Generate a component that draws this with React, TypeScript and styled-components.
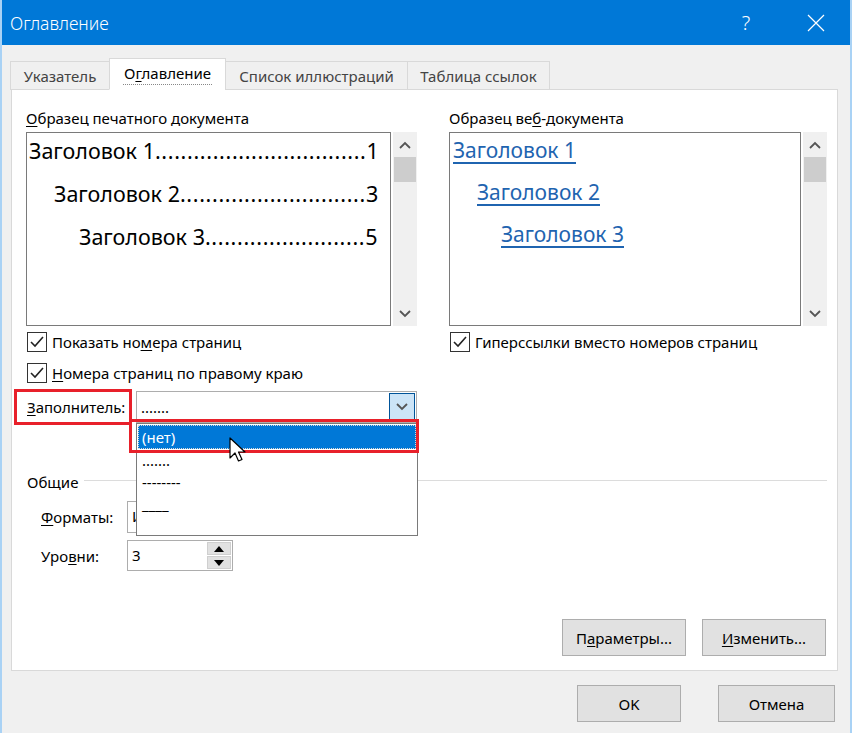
import styled, { createGlobalStyle } from 'styled-components';

const GlobalStyle = createGlobalStyle`
  html, body {
    margin: 0;
    padding: 0;
    background: #f0f0f0;
  }
  body {
    font-family: 'Noto Sans', 'Open Sans', sans-serif;
    font-size: 15px;
    color: #000;
  }
  * { box-sizing: border-box; }
`;

const Window = styled.div`
  width: 852px;
  height: 733px;
  display: flex;
  flex-direction: column;
  background: #f0f0f0;
  border-left: 2px solid #a9d2f5;
  border-right: 2px solid #a9d2f5;
  overflow: hidden;
`;

const TitleBar = styled.div`
  height: 45px;
  margin: 0 -2px;
  padding: 0 13px 0 10px;
  display: flex;
  align-items: center;
  background: #0078d7;
  color: #fff;
`;

const Title = styled.div`
  flex: 1;
  font-size: 17.5px;
  font-weight: 300;
`;

const TitleButton = styled.div<{ $gap?: number }>`
  width: 46px;
  height: 45px;
  display: flex;
  align-items: center;
  justify-content: center;
  font-size: 20px;
  font-weight: 300;
  margin-left: ${(p) => p.$gap ?? 0}px;
`;

const Body = styled.div`
  flex: 1;
  display: flex;
  flex-direction: column;
  padding: 12px 12px 0 9px;
`;

const Tabs = styled.div`
  display: flex;
  align-items: flex-end;
  height: 32px;
  position: relative;
  z-index: 1;
`;

const Tab = styled.div<{ $active?: boolean; $w: number }>`
  width: ${(p) => p.$w}px;
  height: ${(p) => (p.$active ? 32 : 29)}px;
  display: flex;
  align-items: center;
  justify-content: center;
  font-size: 15px;
  color: ${(p) => (p.$active ? '#000' : '#444')};
  background: ${(p) => (p.$active ? '#fff' : '#f0f0f0')};
  border: 1px solid #d9d9d9;
  border-bottom: ${(p) => (p.$active ? '1px solid #fff' : '1px solid #d9d9d9')};
  margin-left: -1px;
  margin-bottom: -1px;
`;

const TabLabel = styled.span`
  border-bottom: 1px dotted #888;
  padding: 0 1px 1px;
`;

const Panel = styled.div`
  height: 582px;
  background: #fff;
  border: 1px solid #d9d9d9;
  display: flex;
  flex-direction: column;
  padding: 18px 11px 14px 14px;
`;

const Columns = styled.div`
  display: flex;
  gap: 32px;
`;

const Column = styled.div<{ $w: number }>`
  width: ${(p) => p.$w}px;
  flex-shrink: 0;
  min-width: 0;
  display: flex;
  flex-direction: column;
`;

const Caption = styled.div`
  height: 21px;
  line-height: 21px;
  font-size: 15px;
  margin-bottom: 3px;
  white-space: nowrap;
`;

const PreviewFrame = styled.div`
  height: 194px;
  display: flex;
`;

const PreviewBox = styled.div`
  flex: 1;
  min-width: 0;
  border: 1px solid #7a7a7a;
  background: #fff;
  padding: 0 13px 0 2px;
  display: flex;
  flex-direction: column;
  overflow: hidden;
`;

const Scrollbar = styled.div`
  width: 24px;
  flex-shrink: 0;
  margin-left: 2px;
  background: #f0f0f0;
  display: flex;
  flex-direction: column;
  align-items: center;
`;

const ScrollArrow = styled.div`
  height: 25px;
  width: 100%;
  display: flex;
  align-items: center;
  justify-content: center;
`;

const ScrollThumb = styled.div`
  width: 22px;
  height: 25px;
  background: #cdcdcd;
`;

const ScrollTrack = styled.div`
  flex: 1;
`;

const TocLine = styled.div<{ $indent: number }>`
  display: flex;
  align-items: baseline;
  height: 43px;
  line-height: 36px;
  padding-left: ${(p) => p.$indent}px;
  font-size: 21.5px;
  white-space: nowrap;
`;

const Leader = styled.span`
  letter-spacing: 0.65px;
`;

const PageNum = styled.span`
  margin-left: auto;
`;

const WebLine = styled.div<{ $indent: number }>`
  height: 42px;
  line-height: 34px;
  padding-left: ${(p) => p.$indent}px;
  font-size: 21px;
  white-space: nowrap;
`;

const WebLink = styled.span`
  color: #1f64b0;
  text-decoration: underline;
  text-decoration-thickness: 2px;
  text-underline-offset: 4px;
`;

const CheckRow = styled.div`
  display: flex;
  align-items: center;
  height: 31px;
  gap: 5px;
  padding-left: 1px;
  white-space: nowrap;
`;

const Box = styled.div`
  width: 20px;
  height: 20px;
  border: 1px solid #333;
  background: #fff;
  display: flex;
  align-items: center;
  justify-content: center;
`;

const U = styled.span`
  text-decoration: underline;
  text-underline-offset: 2px;
`;

const FillerRow = styled.div`
  position: relative;
  display: flex;
  align-items: center;
  height: 36px;
  margin-top: 1px;
  padding-left: 1px;
`;

const FillerLabel = styled.div`
  width: 109px;
`;

const HighlightBox = styled.div<{ $l: number; $t: number; $w: number; $h: number }>`
  position: absolute;
  left: ${(p) => p.$l}px;
  top: ${(p) => p.$t}px;
  width: ${(p) => p.$w}px;
  height: ${(p) => p.$h}px;
  border: 3px solid #e8202a;
  pointer-events: none;
  z-index: 5;
`;

const Combo = styled.div<{ $w: number }>`
  position: relative;
  width: ${(p) => p.$w}px;
  height: 32px;
  border: 1px solid #adadad;
  background: #fff;
  display: flex;
  align-items: center;
  padding-left: 4px;
`;

const ComboText = styled.span`
  flex: 1;
  font-size: 15px;
  line-height: 1;
`;

const DropButton = styled.div`
  width: 26px;
  height: 28px;
  margin-right: 1px;
  background: #cce4f7;
  border: 1px solid #005499;
  display: flex;
  align-items: center;
  justify-content: center;
`;

const DropList = styled.div`
  position: absolute;
  left: -1px;
  top: 31px;
  width: 282px;
  height: 113px;
  background: #fff;
  border: 1px solid #7a7a7a;
  padding: 1px;
  z-index: 4;
`;

const DropItem = styled.div<{ $selected?: boolean }>`
  height: ${(p) => (p.$selected ? 24 : 22)}px;
  display: flex;
  align-items: center;
  padding-left: 4px;
  color: ${(p) => (p.$selected ? '#fff' : '#000')};
  background: ${(p) => (p.$selected ? '#0078d7' : '#fff')};
  outline: ${(p) => (p.$selected ? '1px dotted #d8d8d8' : 'none')};
  outline-offset: -1px;
  font-size: 15px;
`;

const Cursor = styled.svg`
  position: absolute;
  left: 92px;
  top: 45px;
  z-index: 6;
`;

const Group = styled.div`
  margin-top: 46px;
  display: flex;
  flex-direction: column;
`;

const GroupHeader = styled.div`
  display: flex;
  align-items: center;
  gap: 6px;
  height: 22px;
  padding-left: 1px;
`;

const GroupLine = styled.div`
  flex: 1;
  height: 1px;
  background: #dcdcdc;
  margin-right: -1px;
  margin-top: -3px;
`;

const FormRow = styled.div`
  display: flex;
  align-items: center;
  height: 39px;
  padding-left: 15px;
`;

const FormLabel = styled.div`
  width: 86px;
`;

const SpinBox = styled.div`
  width: 106px;
  height: 31px;
  border: 1px solid #adadad;
  background: #fff;
  display: flex;
  align-items: center;
  padding-left: 4px;
`;

const SpinButtons = styled.div`
  width: 24px;
  display: flex;
  flex-direction: column;
  gap: 1px;
  margin-right: 1px;
`;

const SpinButton = styled.div`
  height: 13px;
  background: #e1e1e1;
  border: 1px solid #cfcfcf;
  display: flex;
  align-items: center;
  justify-content: center;
`;

const PanelButtons = styled.div`
  margin-top: auto;
  display: flex;
  justify-content: flex-end;
  gap: 16px;
`;

const Button = styled.div<{ $w: number }>`
  width: ${(p) => p.$w}px;
  height: 37px;
  background: #e1e1e1;
  border: 1px solid #adadad;
  display: flex;
  align-items: center;
  justify-content: center;
  font-size: 15px;
`;

const Footer = styled.div`
  display: flex;
  justify-content: flex-end;
  gap: 37px;
  padding: 14px 3px 0 0;
`;

const Chevron = ({ up }: { up?: boolean }) => (
  <svg width="12" height="8" viewBox="0 0 12 8">
    <path
      d={up ? 'M1 7 L6 2 L11 7' : 'M1 1 L6 6 L11 1'}
      fill="none"
      stroke="#555"
      strokeWidth="1.8"
    />
  </svg>
);

const Check = () => (
  <svg width="16" height="14" viewBox="0 0 16 14">
    <path d="M2 7 L6 11 L14 2" fill="none" stroke="#222" strokeWidth="1.6" />
  </svg>
);

const Tri = ({ up }: { up?: boolean }) => (
  <svg width="10" height="6" viewBox="0 0 10 6">
    <path d={up ? 'M0 6 L5 0 L10 6 Z' : 'M0 0 L5 6 L10 0 Z'} fill="#000" />
  </svg>
);

function PreviewScroll() {
  return (
    <Scrollbar>
      <ScrollArrow>
        <Chevron up />
      </ScrollArrow>
      <ScrollThumb />
      <ScrollTrack />
      <ScrollArrow>
        <Chevron />
      </ScrollArrow>
    </Scrollbar>
  );
}

const tocLines = [
  { name: 'Заголовок 1', page: '1', indent: 0, dots: 33 },
  { name: 'Заголовок 2', page: '3', indent: 25, dots: 29 },
  { name: 'Заголовок 3', page: '5', indent: 50, dots: 25 },
];

const webLines = [
  { name: 'Заголовок 1', indent: 1 },
  { name: 'Заголовок 2', indent: 25 },
  { name: 'Заголовок 3', indent: 49 },
];

export default function App() {
  return (
    <>
      <GlobalStyle />
      <Window>
        <TitleBar>
          <Title>Оглавление</Title>
          <TitleButton>?</TitleButton>
          <TitleButton $gap={24}>
            <svg width="18" height="18" viewBox="0 0 18 18">
              <path d="M1 1 L17 17 M17 1 L1 17" stroke="#fff" strokeWidth="1.2" />
            </svg>
          </TitleButton>
        </TitleBar>
        <Body>
          <Tabs>
            <Tab $w={100}>Указатель</Tab>
            <Tab $w={117} $active>
              <TabLabel>
                О<U>г</U>лавление
              </TabLabel>
            </Tab>
            <Tab $w={183}>Список иллюстраций</Tab>
            <Tab $w={143}>Таблица ссылок</Tab>
          </Tabs>
          <Panel>
            <Columns>
              <Column $w={391}>
                <Caption>
                  <U>О</U>бразец печатного документа
                </Caption>
                <PreviewFrame>
                  <PreviewBox>
                    {tocLines.map((l) => (
                      <TocLine key={l.name} $indent={l.indent}>
                        <span>{l.name}</span>
                        <Leader>{'.'.repeat(l.dots)}</Leader>
                        <PageNum>{l.page}</PageNum>
                      </TocLine>
                    ))}
                  </PreviewBox>
                  <PreviewScroll />
                </PreviewFrame>
                <CheckRow>
                  <Box>
                    <Check />
                  </Box>
                  <span>
                    Показать но<U>м</U>ера страниц
                  </span>
                </CheckRow>
                <CheckRow>
                  <Box>
                    <Check />
                  </Box>
                  <span>
                    <U>Н</U>омера страниц по правому краю
                  </span>
                </CheckRow>
                <FillerRow>
                  <HighlightBox $l={-12} $t={0} $w={118} $h={36} />
                  <FillerLabel>
                    <U>З</U>аполнитель:
                  </FillerLabel>
                  <Combo $w={281}>
                    <ComboText>.......</ComboText>
                    <DropButton>
                      <Chevron />
                    </DropButton>
                    <HighlightBox $l={-8} $t={27} $w={290} $h={34} />
                    <DropList>
                      <DropItem $selected>(нет)</DropItem>
                      <DropItem>.......</DropItem>
                      <DropItem>--------</DropItem>
                      <DropItem>____</DropItem>
                    </DropList>
                    <Cursor width="20" height="28" viewBox="0 0 20 28">
                      <path
                        d="M1 1 L1 21 L6 16 L9.5 24 L13 22.5 L9.5 15 L16 15 Z"
                        fill="#fff"
                        stroke="#000"
                        strokeWidth="1.2"
                        strokeLinejoin="round"
                      />
                    </Cursor>
                  </Combo>
                </FillerRow>
              </Column>
              <Column $w={378}>
                <Caption>
                  Образец ве<U>б</U>-документа
                </Caption>
                <PreviewFrame>
                  <PreviewBox>
                    {webLines.map((l) => (
                      <WebLine key={l.name} $indent={l.indent}>
                        <WebLink>{l.name}</WebLink>
                      </WebLine>
                    ))}
                  </PreviewBox>
                  <PreviewScroll />
                </PreviewFrame>
                <CheckRow>
                  <Box>
                    <Check />
                  </Box>
                  <span>Гиперссылки вместо номеров страниц</span>
                </CheckRow>
              </Column>
            </Columns>
            <Group>
              <GroupHeader>
                <span>Общие</span>
                <GroupLine />
              </GroupHeader>
              <FormRow style={{ marginTop: 4 }}>
                <FormLabel>
                  <U>Ф</U>орматы:
                </FormLabel>
                <Combo $w={150}>
                  <ComboText>Из шаблона</ComboText>
                </Combo>
              </FormRow>
              <FormRow>
                <FormLabel>
                  Уро<U>в</U>ни:
                </FormLabel>
                <SpinBox>
                  <ComboText>3</ComboText>
                  <SpinButtons>
                    <SpinButton>
                      <Tri up />
                    </SpinButton>
                    <SpinButton>
                      <Tri />
                    </SpinButton>
                  </SpinButtons>
                </SpinBox>
              </FormRow>
            </Group>
            <PanelButtons>
              <Button $w={124}>
                П<U>а</U>раметры...
              </Button>
              <Button $w={124}>
                <U>И</U>зменить...
              </Button>
            </PanelButtons>
          </Panel>
          <Footer>
            <Button $w={104}>OK</Button>
            <Button $w={117}>Отмена</Button>
          </Footer>
        </Body>
      </Window>
    </>
  );
}
